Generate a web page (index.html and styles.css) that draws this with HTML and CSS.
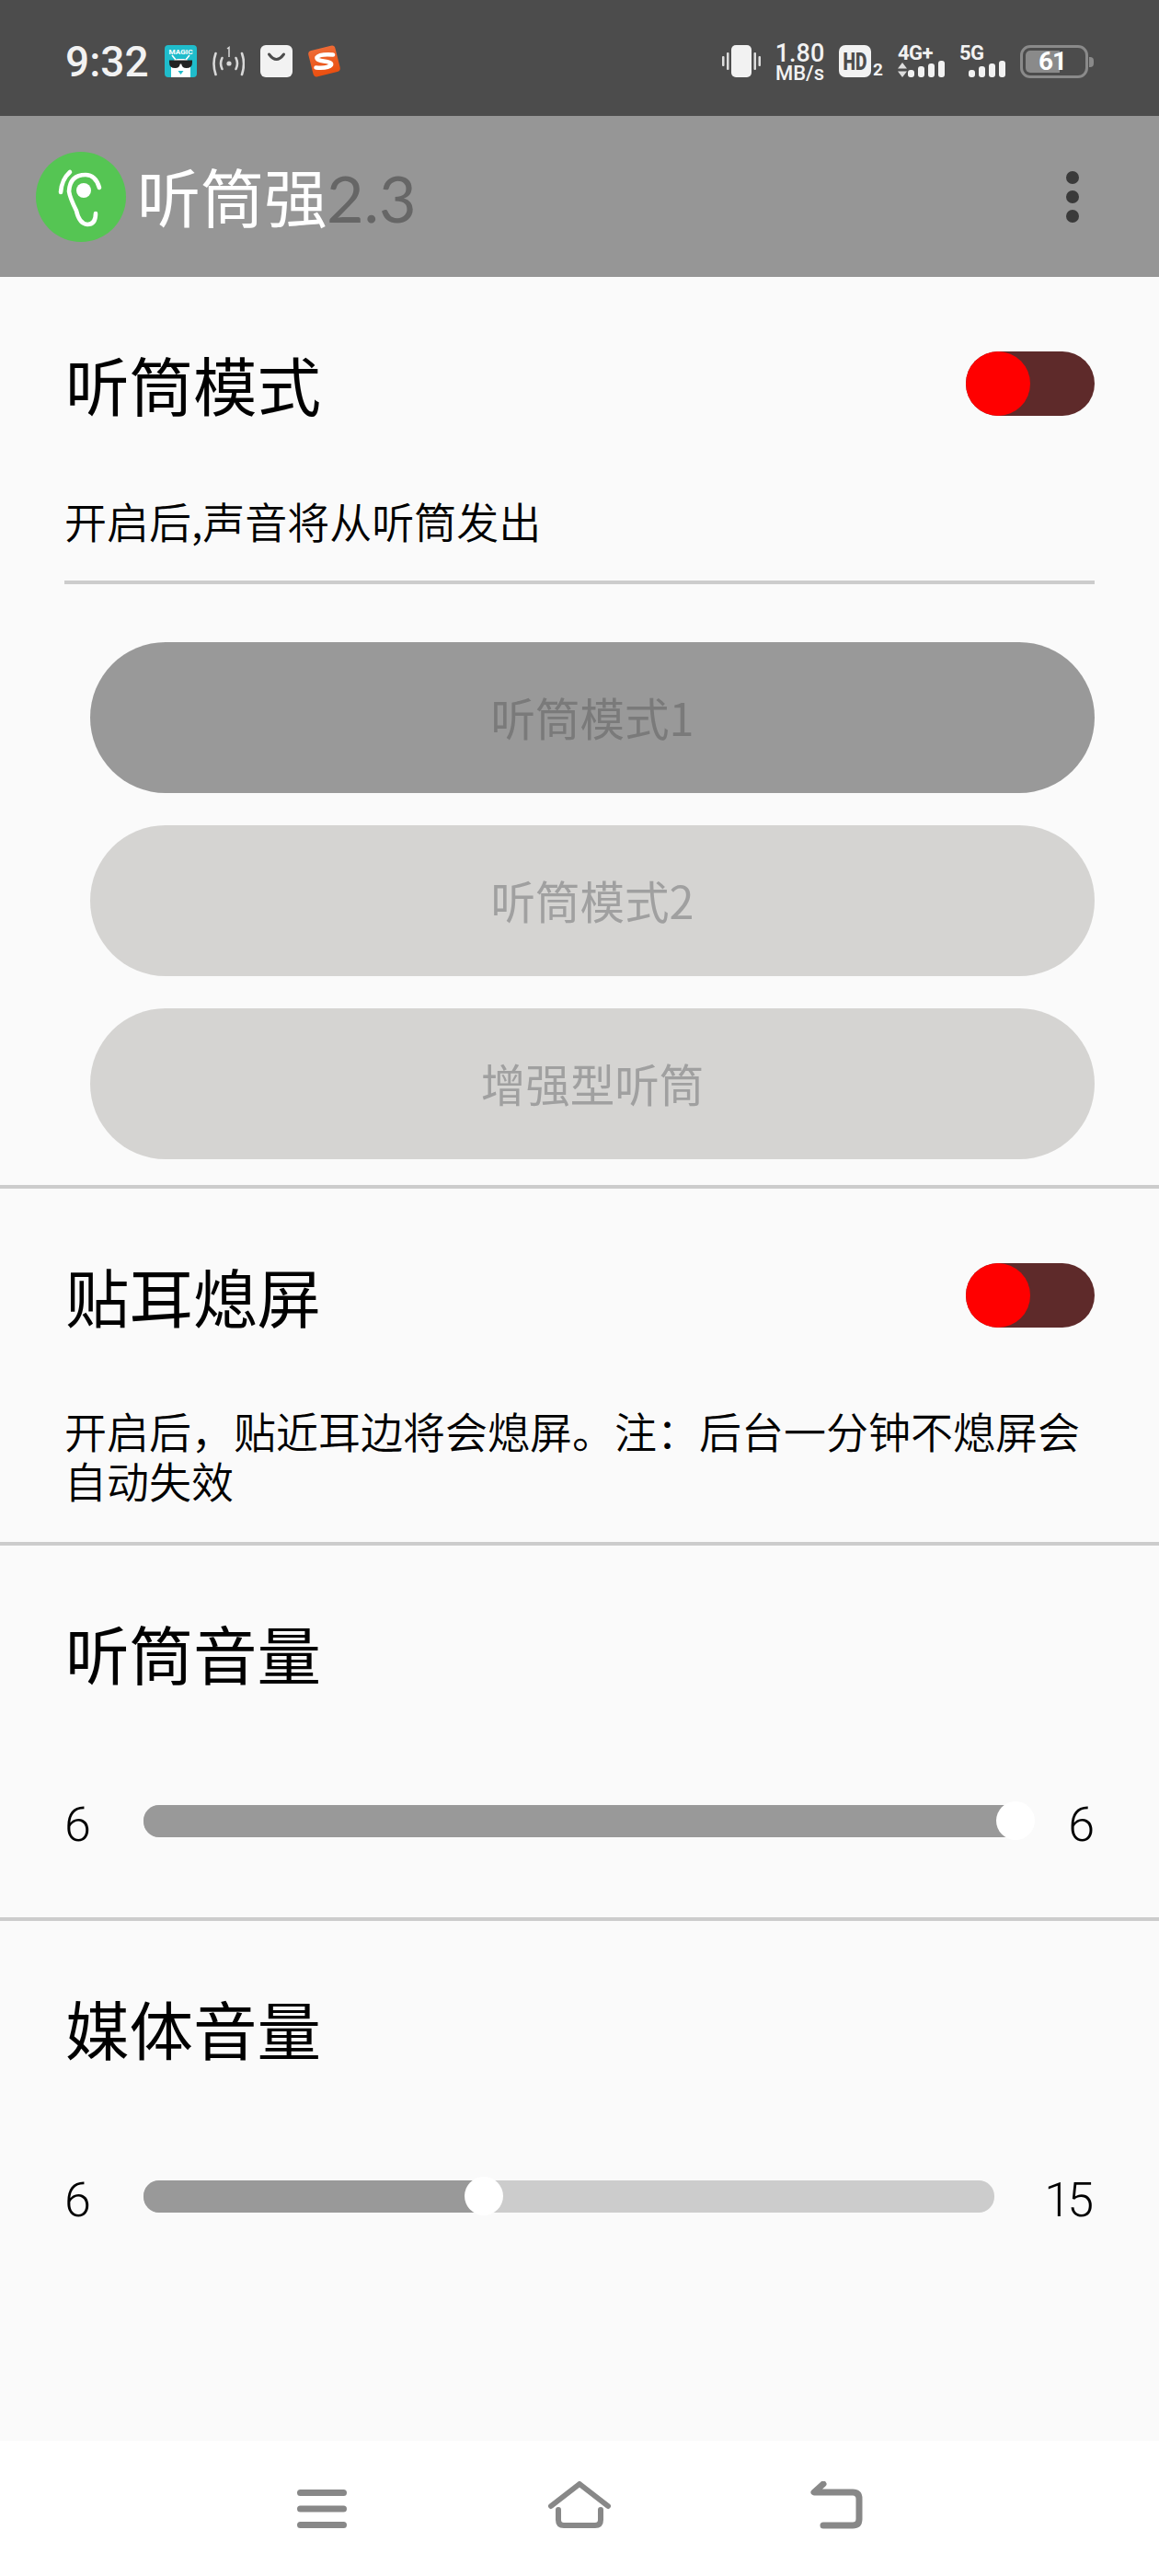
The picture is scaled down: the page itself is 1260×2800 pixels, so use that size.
FILE: index.html
```html
<!DOCTYPE html>
<html lang="zh-CN">
<head>
  <meta charset="UTF-8">
  <meta name="viewport" content="width=device-width, initial-scale=1.0">
  <title>听筒强</title>
  <link rel="stylesheet" href="styles.css">
</head>
<body>
  <div class="phone">
    <!-- status bar -->
    <div class="status-bar">
      <div class="status-left">
        <span class="clock">9:32</span>
        <svg class="icon-35" viewBox="0 0 35 35">
          <rect width="35" height="35" rx="4" fill="#1fbccb"/>
          <text x="17.5" y="10" text-anchor="middle" font-size="7.5" font-weight="700" font-family="Roboto, sans-serif" fill="#fff" textLength="26" lengthAdjust="spacingAndGlyphs">MAGIC</text>
          <path d="M7 35 V24 Q7 16 14 15 H21 Q28 16 28 24 V35 Z" fill="#fff"/>
          <path d="M8 11 L12 16 M27 11 L23 16" fill="none" stroke="#fff" stroke-width="1.6"/>
          <path d="M5 16.5 H30 V19 Q30 25 23.5 25 Q19 25 18.2 20.5 H16.8 Q16 25 11.5 25 Q5 25 5 19 Z" fill="#222"/>
          <path d="M14.5 28 H20.5 L17.5 32 Z" fill="#1fbccb"/>
        </svg>
        <svg class="icon-35" viewBox="0 0 35 35" fill="none" stroke="#d8d8d8" stroke-width="2.6" stroke-linecap="round">
          <circle cx="18" cy="20" r="2.6" fill="#d8d8d8" stroke="none"/>
          <path d="M10.5 14 Q7.5 20 10.5 26"/>
          <path d="M25.5 14 Q28.5 20 25.5 26"/>
          <path d="M3.5 9 Q-0.5 20 3.5 32"/>
          <path d="M32 9 Q36 20 32 32"/>
          <path d="M16 4 L18 2.5 V13" stroke-width="1.5" stroke-linecap="butt"/>
        </svg>
        <svg class="icon-35" viewBox="0 0 35 35">
          <rect width="35" height="35" rx="6" fill="#f2f2f2"/>
          <path d="M9.5 10 Q17.5 21 25.5 10" fill="none" stroke="#4c4c4c" stroke-width="3" stroke-linecap="round"/>
        </svg>
        <svg class="icon-35" viewBox="0 0 35 35">
          <defs>
            <linearGradient id="sogou" x1="0" y1="0" x2="0" y2="1">
              <stop offset="0" stop-color="#ee6a35"/>
              <stop offset="1" stop-color="#ea4f10"/>
            </linearGradient>
          </defs>
          <rect x="2.5" y="3" width="30" height="29" rx="4" fill="url(#sogou)" transform="rotate(-14 17.5 17.5)"/>
          <path d="M27 10.5 Q12 9.5 9.5 13.5 Q9 16.5 17 17.5 Q26 18.5 25 21.5 Q22 25.5 8.5 24.5" fill="none" stroke="#fff" stroke-width="4.6" stroke-linecap="round"/>
        </svg>
      </div>
      <div class="status-right">
        <svg class="icon-vibrate" viewBox="0 0 42 35">
          <rect x="10" width="22" height="35" rx="5" fill="#f2f2f2"/>
          <rect y="12" width="2.5" height="11" rx="1" fill="#ddd"/>
          <rect x="5" y="8" width="2.5" height="19" rx="1" fill="#ddd"/>
          <rect x="34.5" y="8" width="2.5" height="19" rx="1" fill="#ddd"/>
          <rect x="39.5" y="12" width="2.5" height="11" rx="1" fill="#ddd"/>
        </svg>
        <div class="speed">
          <span class="speed-num">1.80</span>
          <span class="speed-unit">MB/s</span>
        </div>
        <div class="hd">
          <svg class="hd-box" viewBox="0 0 35 35">
            <rect width="35" height="35" rx="7" fill="#f2f2f2"/>
            <text x="17.5" y="26.5" text-anchor="middle" font-size="25.5" font-weight="900" font-family="Roboto, sans-serif" fill="#4c4c4c" textLength="26" lengthAdjust="spacingAndGlyphs">HD</text>
          </svg>
          <span class="hd-num">2</span>
        </div>
        <div class="net net-4g">
          <span class="net-label">4G+</span>
          <svg class="net-arrows" viewBox="0 0 10 16">
            <path d="M5 0 L10 6.5 H0 Z M5 16 L10 9.5 H0 Z" fill="#ddd"/>
          </svg>
          <div class="bars">
            <i class="bar bar-1"></i><i class="bar bar-2"></i><i class="bar bar-3"></i><i class="bar bar-4"></i>
          </div>
        </div>
        <div class="net net-5g">
          <span class="net-label">5G</span>
          <div class="bars">
            <i class="bar bar-1"></i><i class="bar bar-2"></i><i class="bar bar-3"></i><i class="bar bar-4"></i>
          </div>
        </div>
        <div class="battery">
          <div class="battery-body">
            <div class="battery-fill"></div>
            <span class="battery-num">61</span>
          </div>
          <div class="battery-tip"></div>
        </div>
      </div>
    </div>

    <!-- app bar -->
    <div class="app-bar">
      <svg class="logo" viewBox="0 0 98 98">
        <circle cx="49" cy="49" r="49" fill="#55c553"/>
        <g fill="none" stroke="#fff" stroke-width="4.6" stroke-linecap="round">
          <path d="M37 22 Q28 30 27 44"/>
          <path d="M69 39 Q65 25 54 25 Q37 25 36 43 Q37 50 44 64 Q47 78 56 79 Q65 79 65 67"/>
        </g>
        <circle cx="52" cy="42" r="8" fill="#fff"/>
      </svg>
      <div class="app-title"><span class="app-name">听筒强</span><span class="app-ver">2.3</span></div>
      <div class="more">
        <i class="more-dot"></i><i class="more-dot"></i><i class="more-dot"></i>
      </div>
    </div>

    <!-- content -->
    <div class="content">
      <div class="section section-mode">
        <div class="row">
          <h2 class="title">听筒模式</h2>
          <div class="toggle"><div class="toggle-thumb"></div></div>
        </div>
        <p class="desc desc-mode">开启后,声音将从听筒发出</p>
        <div class="inner-line"></div>
        <div class="mode-list">
          <div class="mode-btn mode-btn-active">听筒模式1</div>
          <div class="mode-btn">听筒模式2</div>
          <div class="mode-btn">增强型听筒</div>
        </div>
      </div>

      <div class="section section-screen">
        <div class="row">
          <h2 class="title">贴耳熄屏</h2>
          <div class="toggle"><div class="toggle-thumb"></div></div>
        </div>
        <p class="desc desc-screen">开启后，贴近耳边将会熄屏。注：后台一分钟不熄屏会自动失效</p>
      </div>

      <div class="section section-volume">
        <h2 class="title title-volume">听筒音量</h2>
        <div class="slider-row">
          <span class="num">6</span>
          <div class="track">
            <div class="track-fill" style="width: 948px"></div>
            <div class="thumb" style="left: 927px"></div>
          </div>
          <span class="num num-right">6</span>
        </div>
      </div>

      <div class="section section-media">
        <h2 class="title title-volume">媒体音量</h2>
        <div class="slider-row">
          <span class="num">6</span>
          <div class="track">
            <div class="track-fill" style="width: 370px"></div>
            <div class="thumb" style="left: 349px"></div>
          </div>
          <span class="num num-right num-wide">15</span>
        </div>
      </div>
    </div>

    <!-- nav bar -->
    <div class="nav-bar">
      <svg class="nav-icon" viewBox="0 0 60 52">
        <path d="M6.5 12.5 H53.5 M6.5 30 H53.5 M6.5 47.5 H53.5" fill="none" stroke="#888" stroke-width="7" stroke-linecap="round"/>
      </svg>
      <svg class="nav-icon nav-home" viewBox="0 0 68 52">
        <g fill="none" stroke="#888" stroke-width="6" stroke-linecap="round" stroke-linejoin="round">
          <path d="M3 27 L34 3 L65 27"/>
          <path d="M11 31 V42 Q11 48 17 48 H51 Q57 48 57 42 V31"/>
        </g>
      </svg>
      <svg class="nav-icon nav-back" viewBox="0 0 58 52">
        <g fill="none" stroke="#888" stroke-width="7" stroke-linecap="round" stroke-linejoin="round">
          <path d="M14 3 L4 12 H46 Q53 12 53 19 V41 Q53 48 46 48 H14"/>
        </g>
      </svg>
    </div>
  </div>
</body>
</html>
```

FILE: styles.css
```css
* {
  box-sizing: border-box;
}
body {
  margin: 0;
  font-family: "Noto Sans CJK SC", "Noto Sans", sans-serif;
  background-color: #fff;
}
h2, p {
  margin: 0;
}
.phone {
  width: 1260px;
  height: 2800px;
  display: flex;
  flex-direction: column;
  overflow: hidden;
}

/* status bar */
.status-bar {
  height: 126px;
  background-color: #4c4c4c;
  padding: 49px 71px 0 71px;
  display: flex;
  justify-content: space-between;
  align-items: flex-start;
  color: #f2f2f2;
  font-family: Roboto, sans-serif;
}
.status-left {
  display: flex;
  align-items: flex-start;
  gap: 17px;
}
.clock {
  width: 91px;
  margin-top: 1px;
  font-size: 46px;
  line-height: 35px;
  font-weight: 500;
  white-space: nowrap;
}
.icon-35 {
  width: 35px;
  height: 35px;
  display: block;
}
.status-right {
  display: flex;
  align-items: flex-start;
}
.icon-vibrate {
  width: 42px;
  height: 35px;
  margin-right: 15px;
}
.speed {
  width: 55px;
  margin-top: -2px;
  margin-right: 15px;
  display: flex;
  flex-direction: column;
  align-items: center;
  font-weight: 500;
}
.speed-num {
  font-size: 27px;
  line-height: 23px;
}
.speed-unit {
  font-size: 22px;
  line-height: 19px;
  white-space: nowrap;
}
.hd {
  width: 50px;
  display: flex;
  align-items: flex-end;
  margin-right: 14px;
}
.hd-box {
  width: 35px;
  height: 35px;
  display: block;
}
.hd-num {
  font-size: 19px;
  font-weight: 700;
  line-height: 17px;
  margin-left: 2px;
}
.net {
  position: relative;
  height: 35px;
}
.net-4g {
  width: 51px;
  margin-right: 16px;
}
.net-5g {
  width: 50px;
  margin-right: 16px;
}
.net-label {
  position: absolute;
  left: 0;
  top: -3px;
  font-size: 22px;
  font-weight: 700;
  line-height: 24px;
  letter-spacing: -0.5px;
  white-space: nowrap;
}
.net-arrows {
  position: absolute;
  left: 0;
  bottom: 0;
  width: 10px;
  height: 16px;
}
.bars {
  position: absolute;
  right: 0;
  bottom: 0;
  display: flex;
  align-items: flex-end;
  gap: 4px;
}
.bar {
  display: block;
  width: 7px;
  background-color: #f2f2f2;
  border-radius: 3px;
}
.bar-1 { height: 8px; }
.bar-2 { height: 12px; }
.bar-3 { height: 15px; }
.bar-4 { height: 18px; }
.battery {
  display: flex;
  align-items: center;
  height: 36px;
}
.battery-body {
  position: relative;
  width: 74px;
  height: 36px;
  border: 3px solid #8a8a8a;
  border-radius: 11px;
  padding: 3px;
}
.battery-fill {
  width: 37px;
  height: 100%;
  background-color: #8a8a8a;
  border-radius: 5px 0 0 5px;
}
.battery-num {
  position: absolute;
  left: 17px;
  top: 0;
  font-size: 28px;
  font-weight: 700;
  line-height: 30px;
  letter-spacing: -1px;
  color: #fff;
}
.battery-tip {
  width: 5px;
  height: 11px;
  margin-left: 1px;
  background-color: #8a8a8a;
  border-radius: 0 4px 4px 0;
}

/* app bar */
.app-bar {
  height: 175px;
  background-color: #969696;
  display: flex;
  align-items: center;
  padding: 0 87px 0 39px;
}
.logo {
  width: 98px;
  height: 98px;
  flex-shrink: 0;
}
.app-title {
  margin-left: 12px;
  flex: 1;
  display: flex;
  align-items: baseline;
  font-size: 69px;
  line-height: 80px;
}
.app-name {
  color: #fff;
}
.app-ver {
  color: #666;
  font-family: Lato, sans-serif;
  margin-left: -1px;
  font-size: 70px;
}
.more {
  display: flex;
  flex-direction: column;
  gap: 7px;
  margin-top: 1px;
}
.more-dot {
  display: block;
  width: 14px;
  height: 14px;
  border-radius: 50%;
  background-color: #3a3a3a;
}

/* content */
.content {
  flex: 1;
  background-color: #fafafa;
}
.section {
  padding: 0 70px;
  border-bottom: 4px solid #ccc;
}
.section-media {
  border-bottom: 0;
}
.section-mode {
  height: 991px;
  padding-top: 81px;
}
.section-screen {
  height: 388px;
  padding-top: 81px;
}
.section-volume {
  height: 408px;
}
.row {
  display: flex;
  justify-content: space-between;
  align-items: center;
  height: 70px;
}
.title {
  margin-left: 1px;
  font-size: 69.5px;
  font-weight: 400;
  line-height: 80px;
  color: #000;
}
.title-volume {
  padding-top: 76px;
}
.toggle {
  width: 140px;
  height: 70px;
  border-radius: 35px;
  background-color: #5e2a2a;
}
.toggle-thumb {
  width: 70px;
  height: 70px;
  border-radius: 50%;
  background-color: #ff0000;
}
.desc {
  font-size: 46px;
  line-height: 54px;
  color: #000;
  font-weight: 350;
}
.desc-mode {
  margin-top: 86px;
}
.desc-screen {
  margin-top: 84px;
}
.inner-line {
  height: 4px;
  margin-top: 39px;
  background-color: #ccc;
}
.mode-list {
  margin: 63px 0 0 28px;
  display: flex;
  flex-direction: column;
  gap: 35px;
}
.mode-btn {
  height: 164px;
  border-radius: 82px;
  background-color: #d5d4d2;
  color: #a0a0a0;
  font-size: 48.5px;
  line-height: 163px;
  text-align: center;
}
.mode-btn-active {
  background-color: #999;
  color: #7a7a7a;
}
.slider-row {
  margin-top: 122px;
  display: flex;
  align-items: center;
  height: 43px;
}
.num {
  width: 86px;
  font-family: Roboto, sans-serif;
  font-size: 52px;
  font-weight: 300;
  line-height: 44px;
  color: #000;
  padding-top: 9px;
}
.num-right {
  width: 109px;
  text-align: right;
}
.num-wide {
  letter-spacing: -4px;
  padding-right: 5px;
}
.track {
  position: relative;
  width: 925px;
  height: 35px;
  border-radius: 17px;
  background-color: #ccc;
}
.track-fill {
  height: 100%;
  border-radius: 17px 0 0 17px;
  background-color: #999;
}
.thumb {
  position: absolute;
  top: -4px;
  width: 42px;
  height: 42px;
  border-radius: 50%;
  background-color: #fff;
}

/* nav bar */
.nav-bar {
  height: 147px;
  background-color: #fff;
  position: relative;
}
.nav-icon {
  position: absolute;
  top: 44px;
  left: 320px;
  width: 60px;
  height: 52px;
}
.nav-home {
  left: 596px;
  width: 68px;
}
.nav-back {
  left: 881px;
  width: 58px;
}
```
